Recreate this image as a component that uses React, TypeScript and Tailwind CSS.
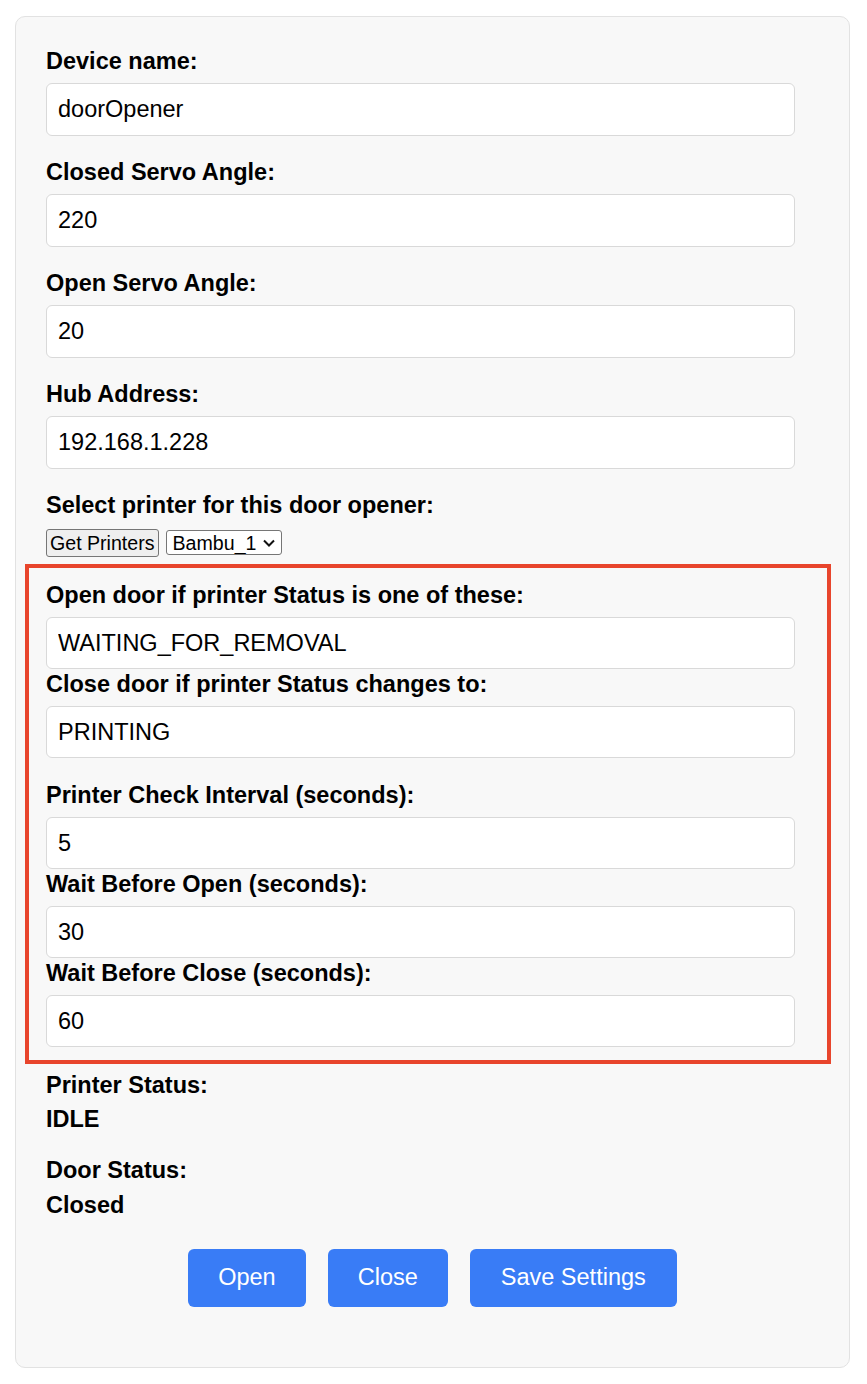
import React, { useState } from 'react';

const font = "font-['Liberation_Sans',Arial,sans-serif]";

type FieldProps = {
  label: string;
  value: string;
  onChange: (v: string) => void;
  className?: string;
  inputHeight?: string;
};

function Field({ label, value, onChange, className = '', inputHeight = 'h-[53px]' }: FieldProps) {
  return (
    <div className={className}>
      <label className="block h-[27px] text-[23.5px] leading-[31px] font-bold text-black">{label}</label>
      <input
        type="text"
        value={value}
        onChange={(e) => onChange(e.target.value)}
        className={`mt-[10px] block w-[749px] ${inputHeight} rounded-[6px] border border-[#d9d9d9] bg-white px-[11px] text-[23.5px] text-black outline-none`}
      />
    </div>
  );
}

export default function App() {
  const [deviceName, setDeviceName] = useState('doorOpener');
  const [closedAngle, setClosedAngle] = useState('220');
  const [openAngle, setOpenAngle] = useState('20');
  const [hub, setHub] = useState('192.168.1.228');
  const [printer, setPrinter] = useState('Bambu_1');
  const [openStatus, setOpenStatus] = useState('WAITING_FOR_REMOVAL');
  const [closeStatus, setCloseStatus] = useState('PRINTING');
  const [interval, setInterval] = useState('5');
  const [waitOpen, setWaitOpen] = useState('30');
  const [waitClose, setWaitClose] = useState('60');

  return (
    <div className={`min-h-screen bg-white pt-[16px] pl-[15px] ${font}`}>
      <div className="w-[835px] rounded-[10px] border border-[#e2e2e2] bg-[#f8f8f8] pt-[29px] pr-[30px] pb-[60px] pl-[30px]">
        <Field label="Device name:" value={deviceName} onChange={setDeviceName} />
        <Field className="mt-[21px]" label="Closed Servo Angle:" value={closedAngle} onChange={setClosedAngle} />
        <Field className="mt-[21px]" label="Open Servo Angle:" value={openAngle} onChange={setOpenAngle} />
        <Field className="mt-[21px]" label="Hub Address:" value={hub} onChange={setHub} />

        <div className="mt-[21px]">
          <label className="block h-[27px] text-[23.5px] leading-[31px] font-bold text-black">
            Select printer for this door opener:
          </label>
          <div className="mt-[12px] flex items-start gap-[7px]">
            <button className="h-[28px] rounded-[3px] border border-[#767676] bg-[#efefef] px-[3px] text-[19.6px] leading-[24px] text-black">
              Get Printers
            </button>
            <div className="relative mt-[1px]">
              <select
                value={printer}
                onChange={(e) => setPrinter(e.target.value)}
                className="block h-[25px] w-[116px] appearance-none rounded-[3px] border border-[#767676] bg-white pl-[6px] text-[19.6px] leading-[22px] text-black outline-none"
              >
                <option>Bambu_1</option>
              </select>
              <svg className="pointer-events-none absolute right-[7px] top-[9px]" width="12" height="8" viewBox="0 0 12 8" fill="none">
                <path d="M1 1.5l5 5 5-5" stroke="#111" strokeWidth="2" />
              </svg>
            </div>
          </div>
        </div>

        <div className="mt-[7px] ml-[-21px] w-[806px] border-4 border-[#e8452c] pt-[12px] pb-[13px] pl-[17px]">
          <Field inputHeight="h-[52px]" label="Open door if printer Status is one of these:" value={openStatus} onChange={setOpenStatus} />
          <Field inputHeight="h-[52px]" label="Close door if printer Status changes to:" value={closeStatus} onChange={setCloseStatus} />
          <Field className="mt-[22px]" inputHeight="h-[52px]" label="Printer Check Interval (seconds):" value={interval} onChange={setInterval} />
          <Field inputHeight="h-[52px]" label="Wait Before Open (seconds):" value={waitOpen} onChange={setWaitOpen} />
          <Field inputHeight="h-[52px]" label="Wait Before Close (seconds):" value={waitClose} onChange={setWaitClose} />
        </div>

        <div className="mt-[8px] text-[23.5px] leading-[27px] font-bold text-black">
          <div>Printer Status:</div>
          <div className="mt-[7px]">IDLE</div>
          <div className="mt-[24px]">Door Status:</div>
          <div className="mt-[8px]">Closed</div>
        </div>

        <div className="mt-[30px] flex justify-center gap-[22px]">
          <button className="h-[58px] rounded-[6px] bg-[#397cf6] px-[30px] text-[23.5px] text-white">Open</button>
          <button className="h-[58px] rounded-[6px] bg-[#397cf6] px-[30px] text-[23.5px] text-white">Close</button>
          <button className="h-[58px] rounded-[6px] bg-[#397cf6] px-[31px] text-[23.5px] text-white">Save Settings</button>
        </div>
      </div>
    </div>
  );
}
